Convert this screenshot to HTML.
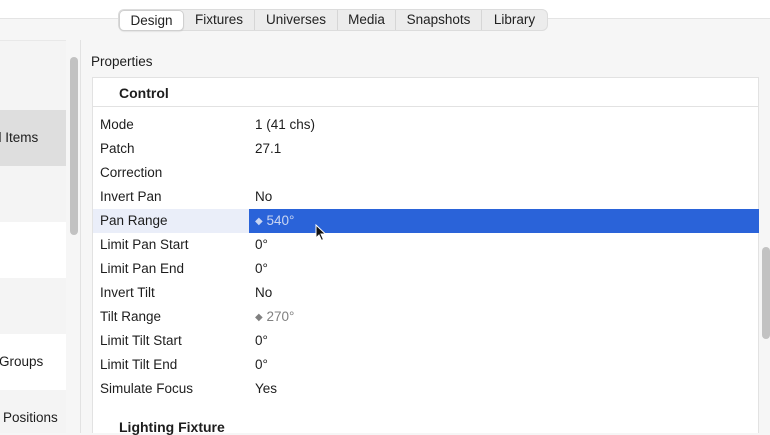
<!DOCTYPE html>
<html><head><meta charset="utf-8"><style>
*{margin:0;padding:0;box-sizing:border-box}
body{width:770px;height:433px;overflow:hidden;background:#f6f6f6;font-family:"Liberation Sans",sans-serif;font-size:13.5px;color:#1d1d1d;position:relative}
.top{position:absolute;left:0;top:0;width:770px;height:19px;background:#fff;border-bottom:1px solid #e4e4e4}
.seg{position:absolute;left:118px;top:9px;width:430px;height:22px;background:#ececec;border:1px solid #dcdcdc;border-radius:6px;display:flex;align-items:center}
.seg span{height:20px;line-height:20px;text-align:center;border-left:1px solid #d6d6d6;font-size:13.5px;color:#222}
.seg span.sel{background:#fff;border-radius:5px;border:1px solid #d0d0d0;box-shadow:0 1px 1px rgba(0,0,0,.08);height:21px}
.row{position:absolute;left:0;width:66px;overflow:hidden;white-space:nowrap;font-size:13.5px}
.vt{position:absolute;left:66px;top:40px;width:15px;height:393px;background:#f6f6f6;border-right:1px solid #e2e2e2}
.thumb{position:absolute;background:#c2c2c2;border-radius:4px}
.panel{position:absolute;left:92px;top:77px;width:667px;height:356px;background:#fff;border:1px solid #e2e2e2;border-bottom:none}
.hdr{position:absolute;left:26px;top:7px;font-weight:bold;font-size:14px}
.hline{position:absolute;left:0;top:28px;width:666px;height:1px;background:#e2e2e2}
.p{position:absolute;left:0;width:666px;height:24px;line-height:24px}
.p .k{position:absolute;left:7px}
.p .v{position:absolute;left:162px}
</style></head><body>
<div class="top"></div>
<div class="seg">
<span class="sel" style="width:65px;border-left:1px solid #d0d0d0">Design</span>
<span style="width:70px;border-left:none">Fixtures</span>
<span style="width:83px">Universes</span>
<span style="width:58px">Media</span>
<span style="width:86px">Snapshots</span>
<span style="width:66px">Library</span>
</div>
<div class="row" style="top:40px;height:70px;background:#f4f4f4;border-top:1px solid #e8e8e8"></div>
<div class="row" style="top:110px;height:56px;background:#dedede;line-height:56px;text-indent:-6px">d Items</div>
<div class="row" style="top:166px;height:56px;background:#f4f4f4"></div>
<div class="row" style="top:222px;height:56px;background:#fff"></div>
<div class="row" style="top:278px;height:56px;background:#f4f4f4"></div>
<div class="row" style="top:334px;height:56px;background:#fff;line-height:56px;text-indent:-1px">Groups</div>
<div class="row" style="top:390px;height:43px;background:#f4f4f4;line-height:56px;padding-left:3px">Positions</div>
<div class="vt"></div>
<div class="thumb" style="left:70px;top:57px;width:8px;height:178px"></div>
<div style="position:absolute;left:91px;top:54px;font-size:13.5px">Properties</div>
<div class="panel">
<div class="hdr">Control</div>
<div class="hline"></div>
<div class="p" style="top:35px"><span class="k">Mode</span><span class="v">1 (41 chs)</span></div>
<div class="p" style="top:59px"><span class="k">Patch</span><span class="v">27.1</span></div>
<div class="p" style="top:83px"><span class="k">Correction</span></div>
<div class="p" style="top:107px"><span class="k">Invert Pan</span><span class="v">No</span></div>
<div class="p" style="top:131px"><div style="position:absolute;left:0;top:0;width:156px;height:24px;background:#eaeef9"></div><div style="position:absolute;left:156px;top:0;width:510px;height:24px;background:#2a63d9"></div><span class="k">Pan Range</span><span class="v" style="color:#c9d5f2"><span style="font-size:10px;position:relative;top:-1px">◆</span> 540°</span></div>
<div class="p" style="top:155px"><span class="k">Limit Pan Start</span><span class="v">0°</span></div>
<div class="p" style="top:179px"><span class="k">Limit Pan End</span><span class="v">0°</span></div>
<div class="p" style="top:203px"><span class="k">Invert Tilt</span><span class="v">No</span></div>
<div class="p" style="top:227px"><span class="k">Tilt Range</span><span class="v" style="color:#808080"><span style="font-size:10px;position:relative;top:-1px">◆</span> 270°</span></div>
<div class="p" style="top:251px"><span class="k">Limit Tilt Start</span><span class="v">0°</span></div>
<div class="p" style="top:275px"><span class="k">Limit Tilt End</span><span class="v">0°</span></div>
<div class="p" style="top:299px"><span class="k">Simulate Focus</span><span class="v">Yes</span></div>
<div class="hdr" style="top:341px">Lighting Fixture</div>
</div>
<div style="position:absolute;left:759px;top:77px;width:11px;height:356px;background:#f6f6f6"></div>
<div class="thumb" style="left:762px;top:247px;width:8px;height:92px"></div>
<svg style="position:absolute;left:315px;top:224px" width="12" height="18" viewBox="0 0 12 18"><path d="M1 1 L1 14 L4 11 L6.5 16.5 L8.5 15.5 L6 10 L10.5 10 Z" fill="#111" stroke="#fff" stroke-width="1"/></svg>
</body></html>
